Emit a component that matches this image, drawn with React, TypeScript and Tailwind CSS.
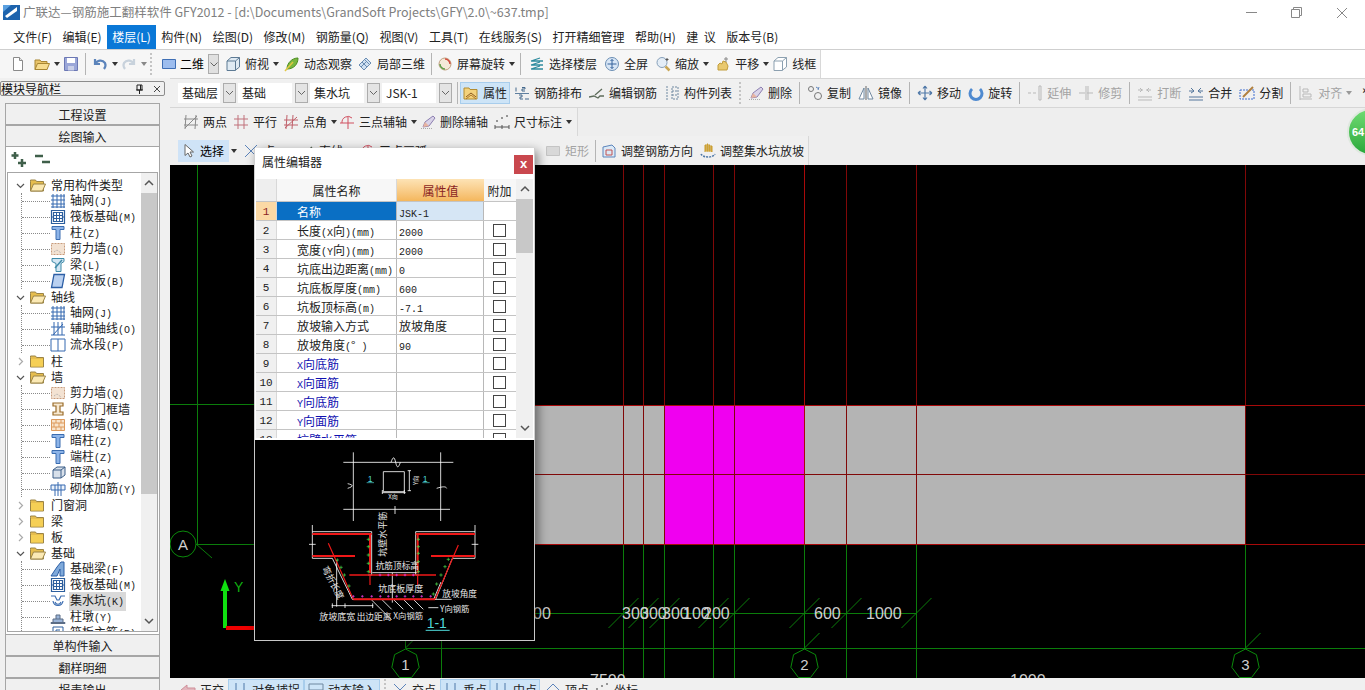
import type { ReactNode } from 'react';

const CJK = "font-['Noto_Sans_CJK_SC','Noto_Sans',sans-serif]";

// 16x16 toolbar and tree icons
const icons: Record<string, ReactNode> = {
  doc: <><path d="M3.5 1.5h6l3 3v10h-9z" fill="#fff" stroke="#8a8a8a" /><path d="M9.5 1.5v3h3" fill="#e8e8e8" stroke="#8a8a8a" /></>,
  open: <><path d="M1 4h5l1 1.500h6v8H1z" fill="#e9c46a" stroke="#a88632" /><path d="M1 13.500l2.500-6h12l-2.500 6z" fill="#f7dc8e" stroke="#a88632" /></>,
  save: <><path d="M1.500 1.500h13v13h-13z" fill="#9aa6d8" stroke="#6c78b4" /><path d="M4 2h8v5H4z" fill="#fff" /><path d="M5 10h6v4.500H5z" fill="#c9cfe8" /></>,
  undo: <path d="M3 3v5h5M3.500 8C5 4.500 10 3 13 7c1 2 .5 4-1 6" fill="none" stroke="#5c84bb" strokeWidth="2.200" />,
  redo: <path d="M13 3v5H8M12.500 8C11 4.500 6 3 3 7c-1 2-.5 4 1 6" fill="none" stroke="#c8d2dc" strokeWidth="2.200" />,
  plane: <path d="M1.500 3.500h13v9h-13z" fill="#9dbdee" stroke="#3f6fb5" />,
  cube: <><path d="M2 5l4-3.500h8.500v9.500L10 14.500H2z" fill="#dfeaf3" stroke="#5d7a94" /><path d="M2 5h8.500v9.500M10.500 5l4-3.500" fill="none" stroke="#5d7a94" /></>,
  orbit: <><path d="M3 13C3 7 8 2 14 2c0 6-4 11-11 11z" fill="#79b73f" stroke="#4a8c1f" /><path d="M1 15L9 6" stroke="#e2c742" strokeWidth="1.500" /></>,
  local3d: <><path d="M2 9l7-7 5 5-7 7z" fill="#cfe0f2" stroke="#6a8db3" /><path d="M5 6l5 5M7.500 3.500l5 5M4 11l6-6" stroke="#6a8db3" /></>,
  rotate: <><circle cx="8" cy="8" r="6" fill="#f5e9d9" stroke="#c0a080" /><path d="M8 3a5 5 0 0 1 5 5" fill="none" stroke="#d14a3c" strokeWidth="1.500" /><path d="M8 13a5 5 0 0 1-5-5" fill="none" stroke="#5fa04a" strokeWidth="1.500" /></>,
  layers: <path d="M2 5l9-3M2 5h12M2 9l9-3M2 9h12M2 13l9-3M2 13h12" fill="none" stroke="#2e8b9e" strokeWidth="1.300" />,
  full: <><circle cx="8" cy="8" r="6.500" fill="#d8e6f6" stroke="#6a8db3" /><path d="M8 3.500v9M3.500 8h9M8 3.500L6.500 5M8 3.500L9.500 5M8 12.500L6.500 11M8 12.500L9.500 11" fill="none" stroke="#34639c" /></>,
  zoom: <><circle cx="7" cy="6.500" r="5" fill="#e4edf6" stroke="#87a0ba" /><path d="M10.500 10.500l4 4" stroke="#c9a654" strokeWidth="2.500" /><path d="M12 2v3M10.500 3.500h3" stroke="#555" /></>,
  pan: <><path d="M3 14V9l2-2 2 1 1-3 3 1 2 4-1 4z" fill="#e9c96f" stroke="#c29d3c" /><path d="M11 1v5M9 3h4" stroke="#888" /></>,
  frame: <><path d="M2 5l4-3.500h8.500v9.500L10 14.500H2z" fill="#fff" stroke="#8ca0b0" /><path d="M2 5h8.500v9.500M10.500 5l4-3.500" fill="none" stroke="#8ca0b0" /></>,
  prop: <><path d="M1 3h5l1 1.500h7V14H1z" fill="#f3d27c" stroke="#b28c30" /><path d="M3 12l5-4 5 4" fill="none" stroke="#8a5a20" /><path d="M3 14l5-4 5 4" fill="none" stroke="#b07a28" /></>,
  layout: <><path d="M1 8.500h14" stroke="#5f7f9f" /><path d="M2 2.500v4M8 2.500h3v1.500h-3v2h3M5 10h3v2h-2v2h3M11 14h4" fill="none" stroke="#44688c" /></>,
  edit: <path d="M0 12l5-1 4 2 2-2h4M6 10l7-6" fill="none" stroke="#5d6b5a" strokeWidth="1.300" />,
  list: <path d="M2 2h2M2 5h2M2 8h2M2 11h2M2 14h2M8 2h6v12H8zM8 6h6M8 10h6" fill="none" stroke="#6f88a0" strokeDasharray="2 1" />,
  erase: <><path d="M1 14.500h11" stroke="#aaa" strokeDasharray="1 1" /><path d="M3 13l2-5 8-6 2 2-6 8z" fill="#d9d3e8" stroke="#8c7fb0" /><path d="M3 13l2-5 4 4z" fill="#e8b4a0" /></>,
  copy: <><circle cx="4" cy="4" r="2.500" fill="none" stroke="#777" /><circle cx="11" cy="11" r="3.500" fill="none" stroke="#777" /><path d="M9 2l3 2M12 2l-1 3" stroke="#5c84bb" /></>,
  mirror: <><path d="M8 1v14" stroke="#666" /><path d="M6 3L1 14h5zM10 3l5 11h-5z" fill="#fff" stroke="#6f88a0" /></>,
  move: <path d="M8 1v14M1 8h14M8 1L6 3.500M8 1l2 2.500M8 15l-2-2.500M8 15l2-2.500M1 8l2.500-2M1 8l2.500 2M15 8l-2.500-2M15 8l-2.500 2" fill="none" stroke="#4f78a8" strokeWidth="1.200" />,
  spin: <path d="M4 4a6 6 0 1 0 8 0" fill="none" stroke="#4f8ad0" strokeWidth="3" />,
  extend: <path d="M1 8h3M6 8h3M12 1v14M14 1v14M12 1h2M12 15h2" fill="none" stroke="#b9b9b9" />,
  trim: <path d="M1 8h6M9 8h6M8 1v14M10 1v14" fill="none" stroke="#b9b9b9" />,
  breakLine: <path d="M1 12h14M1 15h14M1 5h5M9 5h5M3 3l2 2-2 2M12 3l-2 2 2 2" fill="none" stroke="#b9b9b9" />,
  merge: <path d="M1 12h14M1 15h14M1 6h5M10 6h5M3 3l3 3-3 2M13 3l-3 3 3 2" fill="none" stroke="#54779c" />,
  split: <><path d="M1 5h14v9H1z" fill="none" stroke="#3f6fd0" strokeDasharray="2 1" /><path d="M4 12L14 2" stroke="#b08040" strokeWidth="2" /></>,
  align: <path d="M2 1v14M2 14h12M5 4h5v3H5zM5 9h8v3H5z" fill="none" stroke="#b9b9b9" />,
  twoPoint: <path d="M3 1l-1 14M13 1l-1 14M1 5h14M1 11h14M14 2L2 14" fill="none" stroke="#8a8a8a" />,
  parallel: <path d="M5 1v14M11 1v14M1 5h14M1 11h14" fill="none" stroke="#c0707a" />,
  angle: <path d="M4 1l-1 14M10 1l-1 14M1 6h14M1 11h14M14 3L2 14" fill="none" stroke="#c0606a" />,
  threeAxis: <path d="M1 9h14M9 3v12M3 9a6 6 0 0 1 10-5" fill="none" stroke="#d05060" />,
  dim: <><path d="M1 13h14M1 11v4M8 11v4M15 11v4" stroke="#555" /><circle cx="3" cy="7" r="1" fill="#777" /><circle cx="8" cy="4" r="1" fill="#777" /><circle cx="13" cy="2" r="1" fill="#777" /></>,
  pointer: <path d="M5 1.500v11l3-2.500 2 4 2-1-2-4h3.500z" fill="#fff" stroke="#666" />,
  rect: <path d="M1.500 3.500h13v9h-13z" fill="#d8d8d8" stroke="#c4c4c4" />,
  adjustBar: <><path d="M2 4l9-2 3 3v9H2z" fill="#dbe9f6" stroke="#5c84bb" /><path d="M5 7h6v5H5z" fill="none" stroke="#c05050" /></>,
  adjustPit: <><path d="M5 9V2h1v6M7 9V1h1v7M9 9V2h1v6M11 9V3h1v6" stroke="#c79a2c" fill="#e3bb4d" /><path d="M1 11c2 4 12 4 14 0" fill="none" stroke="#4f78a8" strokeWidth="1.500" strokeDasharray="2 1" /></>,
  back: <path d="M1 8l6-5v3h8v4H7v3z" fill="#e2b6bd" stroke="#cf8f99" />,
  snap: <path d="M4 1v14M12 1v14M1 12h14" fill="none" stroke="#4f78a8" />,
  input: <path d="M1 2h14v12H1zM1 8h14" fill="none" stroke="#6f88a0" />,
  cross: <path d="M2 2l12 12M14 2L2 14" stroke="#5c84bb" />,
  top: <path d="M8 2l6 6v6H2V8z" fill="none" stroke="#5c84bb" />,
  grid: <path d="M3 1v14M7 1v14M11 1v14M14 1v14M1 3h14M1 7h14M1 11h14M1 14h14" fill="none" stroke="#3468b0" />,
  raft: <><path d="M1.500 1.500h13v13h-13zM3.500 3.500h9v9h-9z" fill="none" stroke="#2d5f9e" strokeWidth="1.200" /><path d="M6.500 3.500v9M9.500 3.500v9M3.500 6.500h9M3.500 9.500h9M1.500 8h2M12.500 8h2" stroke="#2d5f9e" /></>,
  column: <path d="M2 1.500h12v3H10v10H6v-10H2z" fill="#8db4e8" stroke="#3a6cb0" />,
  wall: <><path d="M1.500 2.500h13v11h-13z" fill="#f3e2d2" stroke="#c79a7a" strokeDasharray="2 1" /><path d="M4 11l3-2 4 3" stroke="#aaa" fill="none" strokeDasharray="1 1" /></>,
  beam: <><path d="M2 1.500h12v3l-3 2v8H6v-8L2 4.500z" fill="#d2e6f3" stroke="#3f8aa8" /><path d="M5 11L12 3" stroke="#3f8aa8" strokeWidth="1.500" /></>,
  slab: <path d="M4 1.500h10.500L12 14.500H1.500z" fill="#b9d0f0" stroke="#2c5ea5" strokeWidth="1.300" />,
  aux: <path d="M4 1v13M8 1v13M12 1v13M1 14h14M1 6h14M13 3L3 14" fill="none" stroke="#3468b0" />,
  section: <path d="M1 2h14v12H1zM8 2v12" fill="#fff" stroke="#3468b0" />,
  door: <path d="M3 2h10v3h-3v6h3v3H3v-3h3V5H3z" fill="#f7e8d0" stroke="#9a6c2a" strokeWidth="1.200" />,
  brick: <path d="M1.500 2.500h13v11h-13zM1.500 6h13M1.500 10h13M6 2.500V6M11 2.500V6M4 6v4M9 6v4M6 10v3.500M11 10v3.500" fill="#f8e4cc" stroke="#dd9a5c" />,
  hidden: <><path d="M3 5l4-3h8v8l-4 3H3z" fill="#d8e0ea" stroke="#3c5f88" /><path d="M3 5h8v8M11 5l4-3" fill="none" stroke="#3c5f88" /></>,
  masonry: <path d="M1 4h14v5H1zM8 1v14M5 4v11M11 4v11" fill="#eef4fb" stroke="#3468b0" />,
  fBeam: <><path d="M1 15l6-9 4-5h3v14H10V8l-3 7z" fill="#7fa9da" stroke="#2c5ea5" /></>,
  pit: <path d="M1 3h4l2 4h2l2-4h4M3 8c1 6 9 6 10 0M5 9c1 3 5 3 6 0" fill="none" stroke="#3a6cb0" strokeWidth="1.200" />,
  pier: <path d="M1 13.500h14v1H1zM3 13V10h10v3M6 10V6h4v4" fill="#9ab4d8" stroke="#5b6d86" />,
  raftBar: <path d="M3 2h10v12H3zM6 5v6M6 5h4M6 8h3" fill="none" stroke="#2d5f9e" />,
};

function Icon({ name, size = 16, className = '' }: { name: string; size?: number; className?: string }) {
  return (
    <svg width={size} height={size} viewBox="0 0 16 16" className={`shrink-0 ${className}`}>
      {icons[name]}
    </svg>
  );
}

function Arrow({ color = 'border-t-[#333]', className = '' }: { color?: string; className?: string }) {
  return <span className={`w-0 h-0 border-x-[3.5px] border-x-transparent border-t-[4px] ${color} ${className}`} />;
}

function Sep({ className = '' }: { className?: string }) {
  return <span className={`w-px h-[22px] bg-[#b4b4b4] shrink-0 ${className}`} />;
}

function Grip({ className = '' }: { className?: string }) {
  return <span className={`h-[22px] shrink-0 border-l-2 border-dotted border-[#c4c4c4] ${className}`} />;
}

function Tool({ icon, label, drop, muted, active, className = '' }: { icon: string; label: string; drop?: boolean; muted?: boolean; active?: boolean; className?: string }) {
  return (
    <div className={`flex items-center gap-[4px] h-[22px] shrink-0 whitespace-nowrap ${muted ? 'text-[#a3a3a3]' : 'text-[#222]'} ${active ? 'bg-[#cde4f7] shadow-[inset_0_0_0_1px_#a8cdec]' : ''} ${className}`}>
      <Icon name={icon} />
      <span>{label}</span>
      {drop && <Arrow color={muted ? 'border-t-[#999]' : 'border-t-[#333]'} />}
    </div>
  );
}

function Combo({ label, wide }: { label: string; wide: string }) {
  return (
    <div className="flex items-center gap-[3px]">
      <div className={`h-[20px] leading-[20px] pl-[4px] bg-white text-[#222] ${wide}`}>{label}</div>
      <div className="w-[13px] h-[20px] border border-[#acacac] bg-[#e4e4e4] flex items-center justify-center">
        <svg width="9" height="6" viewBox="0 0 9 6"><path d="M1 1l3.500 3.500L8 1" fill="none" stroke="#666" /></svg>
      </div>
    </div>
  );
}

// CJK at 12px, ASCII in a narrower mono, as in the old bitmap font
function Mixed({ text }: { text: string }) {
  const parts = text.split(/([\x20-\x7e]+)/);
  return (
    <>
      {parts.map((p, i) =>
        /^[\x20-\x7e]+$/.test(p) ? (
          <span key={i} className="font-['Liberation_Mono',monospace] text-[10px] whitespace-pre">{p}</span>
        ) : (
          <span key={i}>{p}</span>
        ),
      )}
    </>
  );
}

const menus = ['文件(F)', '编辑(E)', '楼层(L)', '构件(N)', '绘图(D)', '修改(M)', '钢筋量(Q)', '视图(V)', '工具(T)', '在线服务(S)', '打开精细管理', '帮助(H)', '建  议', '版本号(B)'];

type TreeGroup = { name: string; open: boolean; items: [string, string][] };

const tree: TreeGroup[] = [
  { name: '常用构件类型', open: true, items: [['grid', '轴网(J)'], ['raft', '筏板基础(M)'], ['column', '柱(Z)'], ['wall', '剪力墙(Q)'], ['beam', '梁(L)'], ['slab', '现浇板(B)']] },
  { name: '轴线', open: true, items: [['grid', '轴网(J)'], ['aux', '辅助轴线(O)'], ['section', '流水段(P)']] },
  { name: '柱', open: false, items: [] },
  { name: '墙', open: true, items: [['wall', '剪力墙(Q)'], ['door', '人防门框墙'], ['brick', '砌体墙(Q)'], ['column', '暗柱(Z)'], ['column', '端柱(Z)'], ['hidden', '暗梁(A)'], ['masonry', '砌体加筋(Y)']] },
  { name: '门窗洞', open: false, items: [] },
  { name: '梁', open: false, items: [] },
  { name: '板', open: false, items: [] },
  { name: '基础', open: true, items: [['fBeam', '基础梁(F)'], ['raft', '筏板基础(M)'], ['pit', '集水坑(K)'], ['pier', '柱墩(Y)'], ['raftBar', '筏板主筋(R)']] },
];

function Folder({ open }: { open: boolean }) {
  return (
    <svg width="16" height="13" viewBox="0 0 16 13" className="shrink-0">
      <path d="M.5 2.500V1h5l1 1.500h7V12H.5z" fill="#e6bd4e" stroke="#9b8446" />
      {open ? <path d="M.5 12l3-7h12l-3 7z" fill="#fbe9b4" stroke="#9b8446" /> : <path d="M1 4h12v7.500H1z" fill="#f5cf55" />}
    </svg>
  );
}

function TreeView() {
  return (
    <div className="flex-1 min-w-0 overflow-hidden pt-[4px] text-[#222] text-[12px]">
      {tree.map((g) => (
        <div key={g.name}>
          <div className="flex items-center h-[16px] pl-[8px]">
            <svg width="9" height="9" viewBox="0 0 9 9" className="shrink-0">
              {g.open ? <path d="M1 3l3.500 3.500L8 3" fill="none" stroke="#555" strokeWidth="1.200" /> : <path d="M3 1l3.500 3.500L3 8" fill="none" stroke="#aaa" strokeWidth="1.200" />}
            </svg>
            <span className="w-[5px] shrink-0" />
            <Folder open={g.open} />
            <span className="ml-[5px] leading-[16px] whitespace-nowrap">{g.name}</span>
          </div>
          {g.items.length > 0 && (
            <div className="ml-[13px] border-l border-dotted border-[#8a8a8a]">
              {g.items.map(([icon, label]) => (
                <div key={label + icon} className="flex items-center h-[16px]">
                  <span className="w-[28px] shrink-0 border-t border-dotted border-[#8a8a8a]" />
                  <Icon name={icon} />
                  <span className={`ml-[3px] pl-[1px] pr-[2px] leading-[16px] whitespace-nowrap ${label === '集水坑(K)' ? 'bg-[#d9d9d9]' : ''}`}>
                    <Mixed text={label} />
                  </span>
                </div>
              ))}
            </div>
          )}
        </div>
      ))}
    </div>
  );
}

function ScrollBar({ thumb, track }: { thumb: string; track: string }) {
  return (
    <div className={`flex flex-col items-center bg-[#f0f0f0] shrink-0 ${track}`}>
      <svg width="10" height="20" viewBox="0 0 10 20" className="shrink-0"><path d="M1 12l4-4 4 4" fill="none" stroke="#555" strokeWidth="1.500" /></svg>
      <div className={`w-full bg-[#c8c8c8] ${thumb}`} />
      <div className="flex-1" />
      <svg width="10" height="20" viewBox="0 0 10 20" className="shrink-0"><path d="M1 8l4 4 4-4" fill="none" stroke="#555" strokeWidth="1.500" /></svg>
    </div>
  );
}

function NavButton({ label }: { label: string }) {
  return <div className="h-[22px] shrink-0 leading-[21px] text-center text-[#222] bg-[#f0f0f0] border border-[#a6a6a6]">{label}</div>;
}

function Sidebar() {
  return (
    <aside className="w-[170px] shrink-0 bg-[#f0f0f0] pt-[3px] flex flex-col text-[12px] overflow-hidden">
      <div className="h-[15px] w-[165px] flex items-center justify-between pr-[3px] border border-[#8c8c8c] rounded-[2px] bg-[#f0f0f0] text-[#111] leading-[13px]">
        <span>模块导航栏</span>
        <span className="flex items-center gap-[9px] text-[#333]">
          <svg width="9" height="10" viewBox="0 0 9 10"><path d="M2 1h5v5H2zM1 6h7M4.500 6v4M5.500 1v5" fill="none" stroke="#222" /></svg>
          <svg width="8" height="8" viewBox="0 0 8 8"><path d="M1 1l6 6M7 1L1 7" stroke="#444" /></svg>
        </span>
      </div>
      <div className="ml-[5px] w-[155px] mt-[7px] flex flex-col">
        <NavButton label="工程设置" />
        <NavButton label="绘图输入" />
        <div className="h-[487px] shrink-0 flex flex-col border-x border-[#a6a6a6] bg-white">
          <div className="h-[25px] shrink-0 flex items-center pl-[5px] gap-[6px]">
            <svg width="17" height="17" viewBox="0 0 17 17"><path d="M4 1v7M.5 4.500h7M11 8v8M7 12h8" stroke="#3f5f4a" strokeWidth="2.500" /></svg>
            <svg width="17" height="17" viewBox="0 0 17 17"><path d="M1 5h8M8 11h8" stroke="#3f5f4a" strokeWidth="2.500" /></svg>
          </div>
          <div className="h-[460px] flex border border-[#a6a6a6] mx-px">
            <TreeView />
            <ScrollBar track="w-[16px]" thumb="h-[301px]" />
          </div>
        </div>
        <NavButton label="单构件输入" />
        <NavButton label="翻样明细" />
        <NavButton label="报表输出" />
      </div>
    </aside>
  );
}

const rows: [string, string, boolean?][] = [
  ['名称', 'JSK-1'],
  ['长度(X向)(mm)', '2000'],
  ['宽度(Y向)(mm)', '2000'],
  ['坑底出边距离(mm)', '0'],
  ['坑底板厚度(mm)', '600'],
  ['坑板顶标高(m)', '-7.1'],
  ['放坡输入方式', '放坡角度'],
  ['放坡角度(° )', '90'],
  ['X向底筋', '', true],
  ['X向面筋', '', true],
  ['Y向底筋', '', true],
  ['Y向面筋', '', true],
  ['坑壁水平筋', '', true],
];

function PreviewDrawing() {
  const greens: [number, number][] = [[340, 298], [340, 320], [340, 345], [340, 370], [340, 395], [490, 298], [490, 320], [490, 340], [490, 365], [490, 395], [247, 360], [258, 382], [268, 405], [282, 438], [580, 358], [570, 380], [558, 405], [545, 432], [535, 462]];
  const pinks = [295, 322, 350, 376, 400, 425, 450, 475, 500, 527];
  const pinksUp = [375, 400, 425, 450, 475];
  const label = { fill: '#e6e6e6', fontSize: 27, fontFamily: "'Noto Sans CJK SC',sans-serif" };
  return (
    <svg width="280" height="205" viewBox="0 0 840 615" className="block">
      <rect width="840" height="615" fill="#000" />
      <g stroke="#fff" strokeWidth="2.500" fill="none">
        <path d="M265 67h330M265 208h320M295 37v206M557 37v206" />
        <path d="M385 95h63v60h-63zM458 92h10M458 152h10M463 92v60M382 158h70M382 150v12M448 150v12" />
        <path d="M408 67c6-18 10-18 14 0s8 18 14 0M278 145c18-6 18-10 0-14M545 145c18-6 28-6 30 0M420 198v24" />
        <path d="M172 255v100M660 255v100M162 313h20M650 313h20M172 275h178v130h-10M482 275h178M482 275v130h10M172 355h60l60 123h250l50-123h68" />
        <path d="M352 398h135M412 398v90M245 360v140M230 497h125M232 490v14M270 490v14M353 490v14M350 480l60 60M380 478l30 30M415 478l30 30M445 478l30 30M475 478l30 30M505 478h85M520 503h30M536 478l22-52" />
      </g>
      <g stroke="#f01818" fill="none">
        <path d="M172 282h178M345 282v118M482 282h178M488 282v118M172 348h128M528 348h132M295 478h245" strokeWidth="6" />
        <path d="M283 405h260" strokeWidth="5" />
        <path d="M345 405v30M488 405v30M220 310l75 168M610 315l-70 163" strokeWidth="3.500" />
      </g>
      {greens.map(([x, y]) => <path key={`${x}-${y}`} d={`M${x - 5} ${y}h10M${x} ${y - 5}v10`} stroke="#4be04b" strokeWidth="2" />)}
      {pinks.map((x) => <path key={x} d={`M${x - 4} 469h8M${x} 465v8`} stroke="#f040f0" strokeWidth="2" />)}
      {pinksUp.map((x) => <path key={x} d={`M${x - 4} 405h8M${x} 401v8`} stroke="#f040f0" strokeWidth="2" />)}
      <text {...label} x="362" y="386" fontSize="26">抗筋顶标高</text>
      <text {...label} x="370" y="456">坑底板厚度</text>
      <text {...label} x="562" y="470" fontSize="26">放坡角度</text>
      <text {...label} x="555" y="516" fontSize="25">Y向钢筋</text>
      <text {...label} x="193" y="541">放坡底宽</text>
      <text {...label} x="305" y="541" fontSize="26">出边距离</text>
      <text {...label} x="415" y="537" fontSize="25">X向钢筋</text>
      <text {...label} x="400" y="178" fontSize="18">X向</text>
      <text {...label} transform="translate(490 135) rotate(-90)" fontSize="18">Y向</text>
      <text {...label} transform="translate(393 350) rotate(-90)">坑壁水平筋</text>
      <text {...label} transform="translate(200 385) rotate(62)">弯折长度</text>
      <text x="338" y="125" fill="#4fd8d8" fontSize="26" fontFamily="'Liberation Sans',sans-serif">1</text>
      <text x="503" y="125" fill="#4fd8d8" fontSize="26" fontFamily="'Liberation Sans',sans-serif">1</text>
      <path d="M335 128h22M502 128h22" stroke="#4fd8d8" strokeWidth="2" />
      <text x="515" y="564" fill="#4fd8d8" fontSize="42" fontFamily="'Liberation Sans',sans-serif">1-1</text>
      <path d="M512 571h72" stroke="#4fd8d8" strokeWidth="3" />
    </svg>
  );
}

function PropertyDialog() {
  return (
    <div className="absolute left-[254px] top-[148px] w-[281px] text-[12px] text-[#222] shadow-[3px_3px_10px_rgba(0,0,0,0.45)]">
      <div className="bg-white border-x border-[#d0d0d0] h-[292px] flex flex-col">
        <div className="h-[31px] shrink-0 flex items-start justify-between pr-[1px]">
          <span className="pl-[7px] pt-[6px] leading-[16px]">属性编辑器</span>
          <span className="mt-[7px] w-[19px] h-[19px] bg-[#c9484e] text-white text-[13px] font-bold leading-[18px] text-center font-['Liberation_Sans',sans-serif]">x</span>
        </div>
        <div className="h-[259px] mx-[1px] flex overflow-hidden">
          <div className="flex-1 min-w-0">
            <div className="flex h-[23px] bg-[#f7f7f7] border-b border-[#c4c4c4] leading-[24px] text-center">
              <div className="w-[21px] bg-[#eeeeee] border-r border-[#d8d8d8]" />
              <div className="w-[120px] border-r border-[#d8d8d8]">属性名称</div>
              <div className="w-[87px] bg-gradient-to-b from-[#fde3b5] to-[#f4b75c] text-[#8a1f1f]">属性值</div>
              <div className="w-[31px]">附加</div>
            </div>
            {rows.map(([name, value, link], i) => (
              <div key={name} className="flex h-[19px] border-b border-[#c4c4c4] leading-[20px]">
                <div className={`w-[21px] text-center border-r border-[#d8d8d8] font-['Liberation_Mono',monospace] text-[11px] ${i === 0 ? 'bg-[#fbd9a5] text-[#8a1f1f]' : 'bg-[#f0f0f0]'}`}>{i + 1}</div>
                <div className={`w-[120px] pl-[20px] border-r border-[#b8b8b8] whitespace-nowrap ${i === 0 ? 'bg-[#0a6fc4] text-white' : link ? 'text-[#1010b0]' : ''}`}>
                  <Mixed text={name} />
                </div>
                <div className={`w-[87px] pl-[2px] border-r border-[#b8b8b8] ${i === 0 ? 'bg-[#d6e6f5]' : ''}`}>
                  <Mixed text={value} />
                </div>
                <div className="w-[31px] flex items-center justify-center">
                  {i > 0 && <span className="w-[13px] h-[13px] border border-[#444] bg-white" />}
                </div>
              </div>
            ))}
          </div>
          <ScrollBar track="w-[17px]" thumb="h-[54px]" />
        </div>
      </div>
      <div className="bg-black border-x border-b border-[#c8c8c8] h-[201px] overflow-hidden">
        <PreviewDrawing />
      </div>
    </div>
  );
}

function Bubble({ x, label }: { x: number; label: string }) {
  const pts = Array.from({ length: 7 }, (_, i) => {
    const a = (i / 7) * Math.PI * 2 - Math.PI / 2;
    return `${x + 14 * Math.cos(a)},${664 + 15 * Math.sin(a)}`;
  }).join(' ');
  return (
    <g>
      <polygon points={pts} fill="#000" stroke="#0b8a0b" />
      <path d={`M${x} 648l15 -15`} stroke="#0b8a0b" />
      <text x={x} y="670" textAnchor="middle" fill="#d0d0d0" fontSize="15" fontFamily="'Liberation Sans',sans-serif">{label}</text>
    </g>
  );
}

function Canvas() {
  const axes = [623.5, 643.5, 664.5, 713.5, 734.5, 804.5, 846.5, 916.5];
  const dims: [number, string][] = [[533, '00'], [622, '300'], [640, '300'], [662, '300'], [683, '100'], [703, '200'], [814, '600'], [866, '1000']];
  return (
    <div className="h-[513px] shrink-0 bg-black overflow-hidden">
      <svg width="1195" height="513" viewBox="170 165 1195 513" className="block">
        <rect x="405" y="405" width="840" height="139" fill="#b4b4b4" />
        <rect x="664.500" y="405" width="140" height="139" fill="#f000f0" />
        <g stroke="#0b7d0b">
          <path d="M197.500 165V544M170 404.500H254M196 544.500H254M196 544l16 14" fill="none" />
          <path d="M535 613.500H916.500M405.500 648.500H1365M441.500 641V678M405.500 641V648" />
          {[...axes, 1245.5].map((x) => <path key={x} d={`M${x} 544V678`} />)}
          {axes.map((x) => <path key={x} d={`M${x - 15} 628L${x + 15} 598`} />)}
        </g>
        <g stroke="#800808">
          {axes.map((x) => <path key={x} d={`M${x} 165V544`} />)}
          <path d="M1245.500 165V544M405 474.500H1365" />
          <path d="M405 405.500H1365M405 544.500H1365" stroke="#a80a0a" />
          <path d="M804.500 165V544" stroke="#a80a0a" />
        </g>
        <circle cx="183" cy="544" r="13" fill="#000" stroke="#0b8a0b" />
        <text x="183" y="550" textAnchor="middle" fill="#d0d0d0" fontSize="15" fontFamily="'Liberation Sans',sans-serif">A</text>
        <Bubble x={405.5} label="1" />
        <Bubble x={804.5} label="2" />
        <Bubble x={1245.5} label="3" />
        <path d="M225 590V628" stroke="#10e010" strokeWidth="4" />
        <path d="M225 579l4.500 12h-9z" fill="#10e010" />
        <path d="M226 628H254" stroke="#f00000" strokeWidth="4" />
        <text x="234" y="592" fill="#10b010" fontSize="14" fontFamily="'Liberation Sans',sans-serif">Y</text>
        {dims.map(([x, t]) => (
          <text key={x} x={x} y="619" fill="#cfcfcf" fontSize="16" fontFamily="'Liberation Sans',sans-serif">{t}</text>
        ))}
        <text x="590" y="686" fill="#cfcfcf" fontSize="16" fontFamily="'Liberation Sans',sans-serif">7500</text>
        <text x="1010" y="686" fill="#cfcfcf" fontSize="16" fontFamily="'Liberation Sans',sans-serif">1000</text>
      </svg>
    </div>
  );
}

function StatusBar() {
  return (
    <div className="h-[12px] shrink-0 overflow-hidden bg-[#f0f0f0] text-[12px] text-[#222]">
      <div className="flex items-start pl-[10px] pt-[1px]">
        <Tool icon="back" label="正交" />
        <Tool icon="snap" label="对象捕捉" active className="ml-[4px] px-[4px]" />
        <Tool icon="input" label="动态输入" active className="px-[4px]" />
        <Grip className="ml-[4px]" />
        <Tool icon="cross" label="交点" className="ml-[6px]" />
        <Tool icon="snap" label="垂点" active className="ml-[4px] px-[3px]" />
        <Tool icon="snap" label="中点" active className="px-[3px]" />
        <Tool icon="top" label="顶点" className="ml-[5px]" />
        <Tool icon="dim" label="坐标" className="ml-[5px]" />
      </div>
    </div>
  );
}

export default function App() {
  return (
    <div className={`relative w-[1365px] h-[690px] overflow-hidden bg-white flex flex-col text-[12px] ${CJK}`}>
      {/* title bar */}
      <div className="h-[25px] shrink-0 flex items-center pl-[3px] text-[#808080] text-[12.500px]">
        <svg width="17" height="17" viewBox="0 0 17 17"><path d="M0 1h17v15H0z" fill="#1d63ad" /><path d="M2 12L14 3v4L4 14z" fill="#fff" /><path d="M0 1h8L0 8z" fill="#5aa0e0" /></svg>
        <span className="ml-[3px] whitespace-nowrap">广联达—钢筋施工翻样软件 GFY2012 - [d:\Documents\GrandSoft Projects\GFY\2.0\~637.tmp]</span>
        <div className="ml-auto flex items-center gap-[34px] pr-[17px]">
          <svg width="11" height="11" viewBox="0 0 11 11"><path d="M0 5.500h11" stroke="#888" /></svg>
          <svg width="11" height="11" viewBox="0 0 11 11"><path d="M.5 2.500h8v8h-8zM2.500 2.500v-2h8v8h-2" fill="none" stroke="#888" /></svg>
          <svg width="12" height="12" viewBox="0 0 12 12"><path d="M1 1l10 10M11 1L1 11" stroke="#888" /></svg>
        </div>
      </div>

      {/* menu */}
      <div className="h-[25px] shrink-0 flex items-stretch pl-[8px] border-b border-[#cfcfcf] text-[#222]">
        {menus.map((m) => (
          <span key={m} className={`px-[5.25px] leading-[24px] whitespace-pre ${m === '楼层(L)' ? 'bg-[#0a78d7] text-white' : ''}`}>{m}</span>
        ))}
      </div>

      {/* main toolbar */}
      <div className="h-[28px] shrink-0 flex items-center w-[821px] pl-[10px] bg-[#f6f6f6] border-r border-[#d8d8d8] whitespace-nowrap">
        <Icon name="doc" />
        <Icon name="open" className="ml-[8px]" />
        <Arrow className="ml-[4px]" />
        <Icon name="save" className="ml-[3px]" />
        <Sep className="ml-[6px]" />
        <Icon name="undo" className="ml-[6px]" />
        <Arrow className="ml-[4px]" />
        <Icon name="redo" className="ml-[3px]" />
        <Arrow color="border-t-[#888]" className="ml-[4px]" />
        <Grip className="ml-[3px]" />
        <div className="flex items-center gap-[3px] ml-[9px] shrink-0">
          <Icon name="plane" />
          <span>二维</span>
          <span className="w-[11px] h-[20px] ml-[1px] border border-[#acacac] bg-[#e0e0e0] flex items-center justify-center">
            <svg width="8" height="5" viewBox="0 0 8 5"><path d="M.5 .5L4 4 7.500 .5" fill="none" stroke="#666" /></svg>
          </span>
        </div>
        <Tool icon="cube" label="俯视" drop className="ml-[6px]" />
        <Tool icon="orbit" label="动态观察" className="ml-[5px]" />
        <Tool icon="local3d" label="局部三维" className="ml-[5px]" />
        <Sep className="ml-[6px]" />
        <Tool icon="rotate" label="屏幕旋转" drop className="ml-[5px]" />
        <Sep className="ml-[5px]" />
        <Tool icon="layers" label="选择楼层" className="ml-[8px]" />
        <Tool icon="full" label="全屏" className="ml-[7px]" />
        <Tool icon="zoom" label="缩放" drop className="ml-[7px]" />
        <Tool icon="pan" label="平移" drop className="ml-[6px]" />
        <Tool icon="frame" label="线框" className="ml-[3px]" />
      </div>

      <div className="flex-1 min-h-0 flex">
        <Sidebar />
        <main className="flex-1 min-w-0 flex flex-col">
          <div className="h-[30px] shrink-0 flex items-center pl-[8px] gap-[7px] bg-[#f0f0f0] border-y border-[#d6d6d6] whitespace-nowrap">
            <div className="flex items-center gap-[2px]">
              <Combo label="基础层" wide="w-[42px]" />
              <Combo label="基础" wide="w-[54px]" />
              <Combo label="集水坑" wide="w-[54px]" />
              <Combo label="JSK-1" wide="w-[54px]" />
            </div>
            <Sep className="-ml-[2px]" />
            <Tool icon="prop" label="属性" active className="-ml-[5px] px-[3px]" />
            <Tool icon="layout" label="钢筋排布" className="-ml-[3px]" />
            <Tool icon="edit" label="编辑钢筋" />
            <Tool icon="list" label="构件列表" />
            <Grip />
            <Tool icon="erase" label="删除" />
            <Sep />
            <Tool icon="copy" label="复制" />
            <Tool icon="mirror" label="镜像" />
            <Sep />
            <Tool icon="move" label="移动" />
            <Tool icon="spin" label="旋转" />
            <Sep />
            <Tool icon="extend" label="延伸" muted />
            <Tool icon="trim" label="修剪" muted />
            <Sep />
            <Tool icon="breakLine" label="打断" muted />
            <Tool icon="merge" label="合并" />
            <Tool icon="split" label="分割" />
            <Sep />
            <Tool icon="align" label="对齐" drop muted />
            <span className="ml-[3px] -mt-[8px] text-[11px] font-bold text-[#222]">»</span>
          </div>

          <div className="h-[28px] shrink-0 bg-[#eeeeee] flex">
            <div className="w-[408px] pl-[13px] gap-[6px] flex items-center bg-[#f0f0f0] border-r border-[#d8d8d8]">
              <Tool icon="twoPoint" label="两点" />
              <Tool icon="parallel" label="平行" />
              <Tool icon="angle" label="点角" drop />
              <Tool icon="threeAxis" label="三点辅轴" drop className="-ml-[4px]" />
              <Tool icon="erase" label="删除辅轴" className="-ml-[3px]" />
              <Tool icon="dim" label="尺寸标注" drop />
            </div>
          </div>

          <div className="h-[29px] shrink-0 bg-[#eeeeee] flex">
            <div className="w-[639px] pl-[8px] flex items-center gap-[6px] bg-[#f0f0f0] border-r border-[#d8d8d8] whitespace-nowrap">
              <div className="flex items-center gap-[2px] shrink-0">
                <div className="w-[51px] h-[22px] flex items-center gap-[4px] pl-[2px] bg-[#cfe3f7]">
                  <Icon name="pointer" />
                  <span>选择</span>
                </div>
                <Arrow />
              </div>
              <Tool icon="cross" label="点" />
              <Tool icon="edit" label="直线" drop className="ml-[18px]" />
              <Tool icon="threeAxis" label="三点画弧" drop />
              <Tool icon="rect" label="矩形" muted className="ml-[102px]" />
              <Sep />
              <Tool icon="adjustBar" label="调整钢筋方向" className="-ml-[1px]" />
              <Tool icon="adjustPit" label="调整集水坑放坡" className="ml-[1px]" />
            </div>
          </div>

          <Canvas />
          <StatusBar />
        </main>
      </div>

      <PropertyDialog />

      {/* version badge at the right edge */}
      <div className="absolute left-[1347px] top-[108px] w-[48px] h-[48px] rounded-full border-2 border-[#dfe8df] bg-gradient-to-b from-[#6edb72] to-[#27a83a] text-white text-[11px] font-bold leading-[44px] pl-[3px] font-['Liberation_Sans',sans-serif]">64</div>
    </div>
  );
}
